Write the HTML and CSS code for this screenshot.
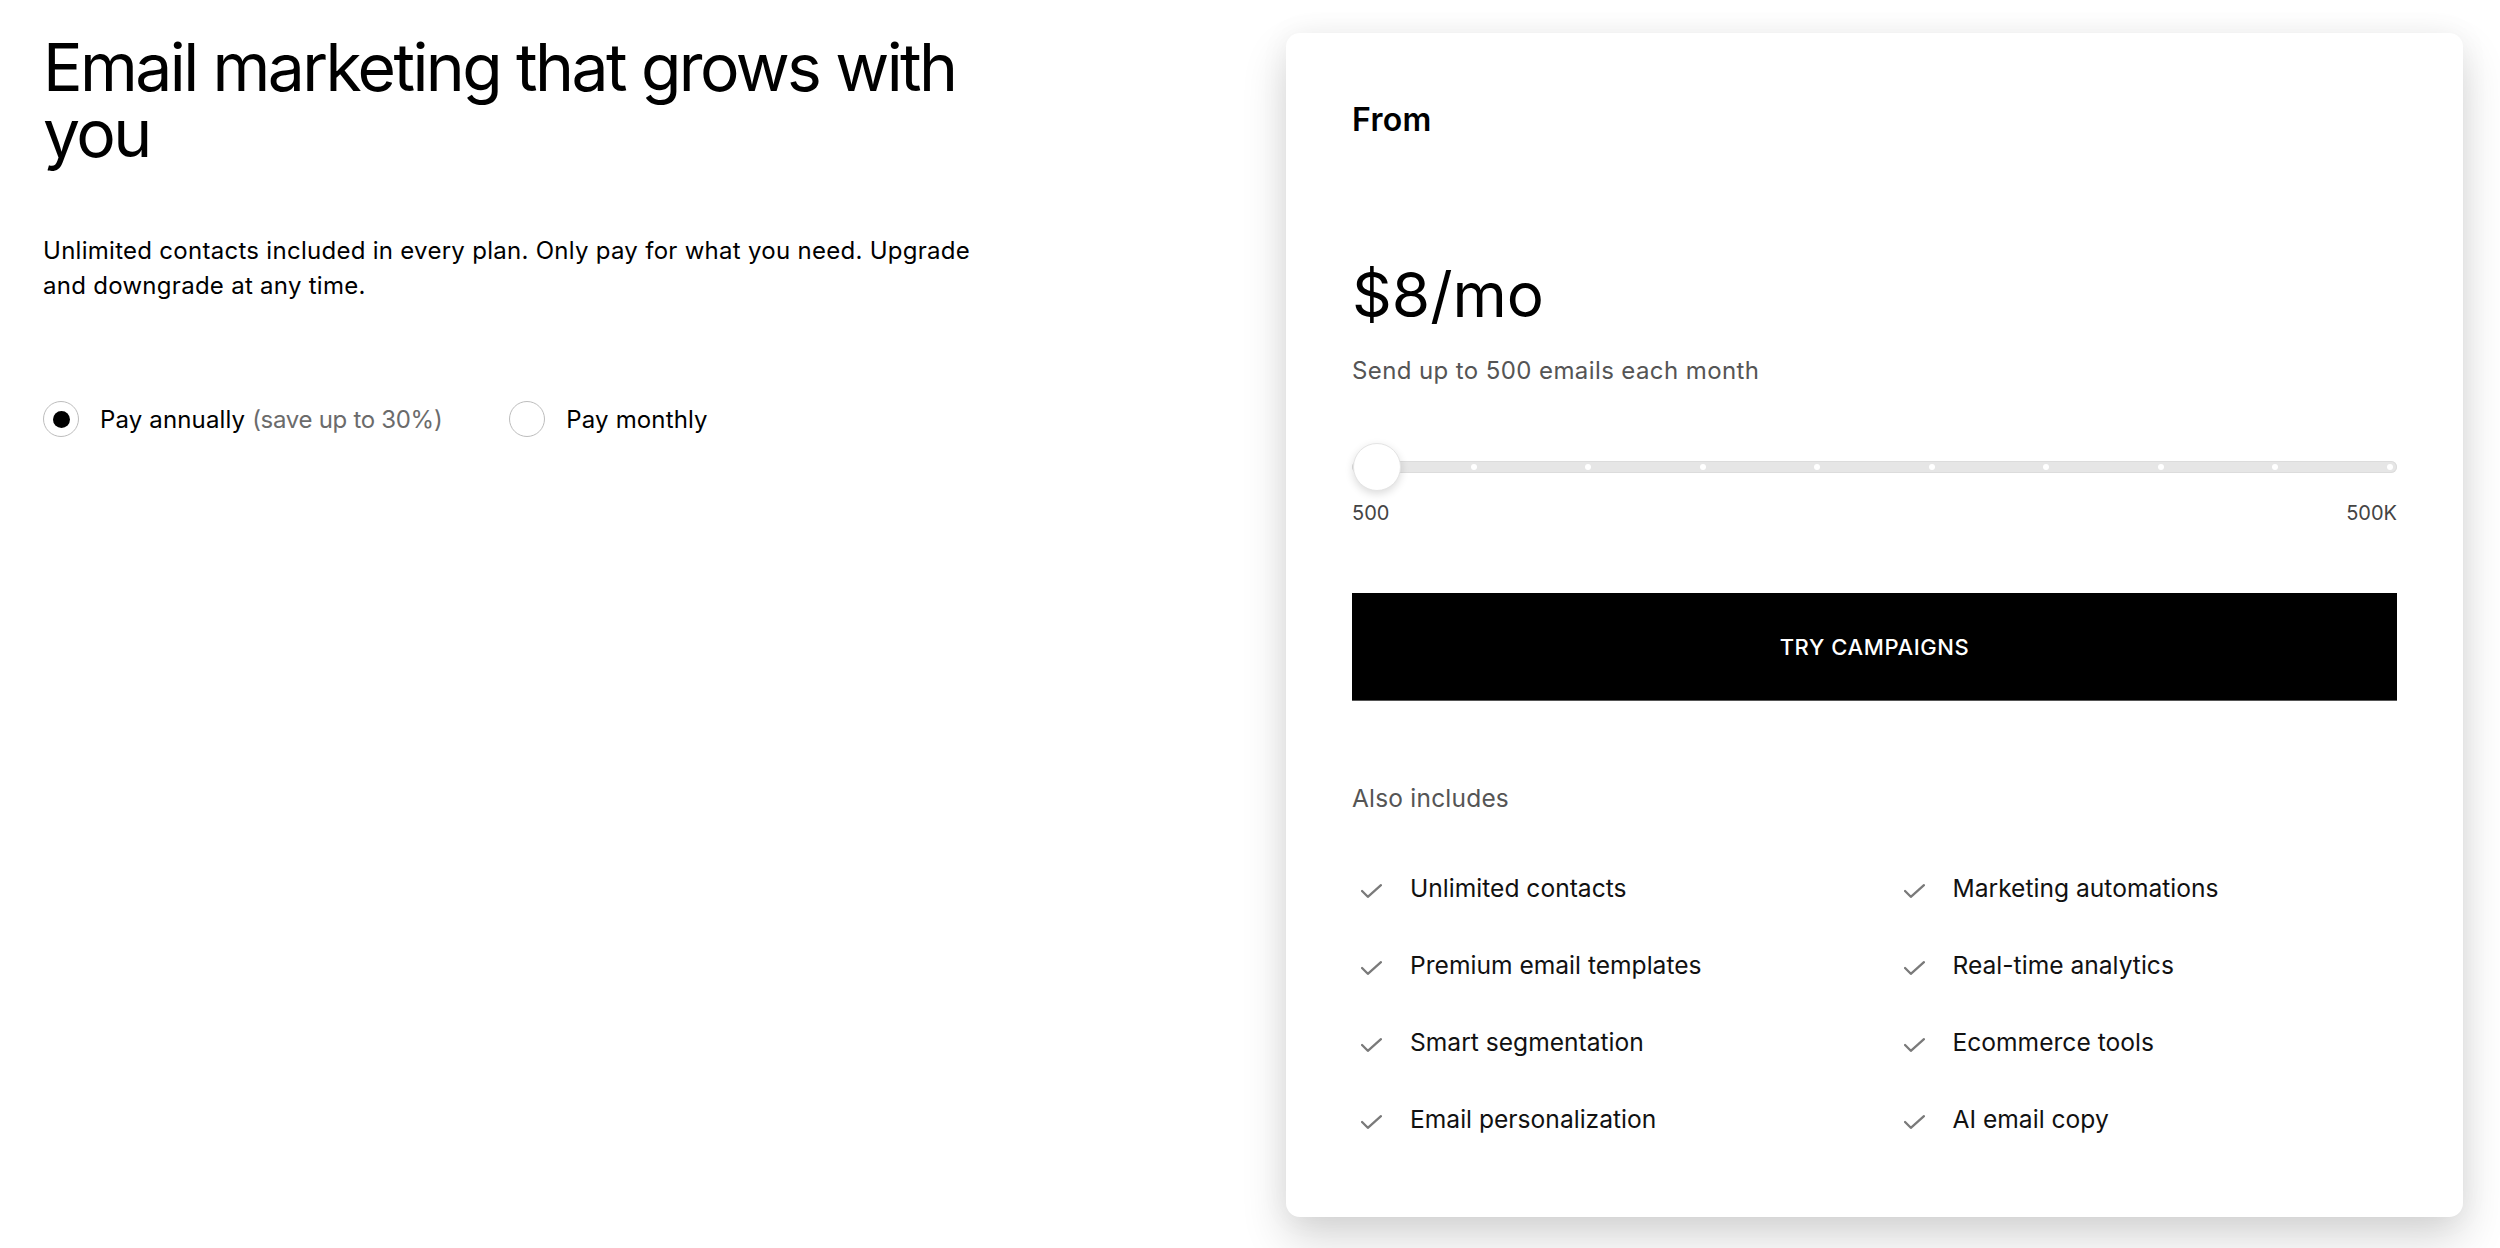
FILE: index.html
```html
<!DOCTYPE html>
<html lang="en">
<head>
<meta charset="utf-8">
<title>Email marketing pricing</title>
<link rel="stylesheet" href="styles.css">
</head>
<body>
<main class="page">
  <section class="intro">
    <h1 class="title">Email marketing that grows with you</h1>
    <p class="lead">Unlimited contacts included in every plan. Only pay for what you need. Upgrade and downgrade at any time.</p>
    <div class="billing">
      <label class="option">
        <span class="radio radio-on"><span class="radio-dot"></span></span>
        <span class="option-text">Pay annually <span class="muted">(save up to 30%)</span></span>
      </label>
      <label class="option">
        <span class="radio"></span>
        <span class="option-text">Pay monthly</span>
      </label>
    </div>
  </section>

  <section class="card">
    <div class="from">From</div>
    <div class="price">$8/mo</div>
    <div class="sends">Send up to 500 emails each month</div>

    <div class="slider">
      <div class="track">
        <span class="tick"></span><span class="tick"></span><span class="tick"></span><span class="tick"></span><span class="tick"></span>
        <span class="tick"></span><span class="tick"></span><span class="tick"></span><span class="tick"></span><span class="tick"></span>
      </div>
      <span class="thumb"></span>
    </div>
    <div class="range-labels"><span>500</span><span>500K</span></div>

    <button class="cta">TRY CAMPAIGNS</button>

    <div class="also">Also includes</div>
    <ul class="features">
      <li class="feature"><svg class="check" viewBox="0 0 20 13" aria-hidden="true"><polyline points="1,6.5 6.5,12 19,1"/></svg><span>Unlimited contacts</span></li>
      <li class="feature"><svg class="check" viewBox="0 0 20 13" aria-hidden="true"><polyline points="1,6.5 6.5,12 19,1"/></svg><span>Marketing automations</span></li>
      <li class="feature"><svg class="check" viewBox="0 0 20 13" aria-hidden="true"><polyline points="1,6.5 6.5,12 19,1"/></svg><span>Premium email templates</span></li>
      <li class="feature"><svg class="check" viewBox="0 0 20 13" aria-hidden="true"><polyline points="1,6.5 6.5,12 19,1"/></svg><span>Real-time analytics</span></li>
      <li class="feature"><svg class="check" viewBox="0 0 20 13" aria-hidden="true"><polyline points="1,6.5 6.5,12 19,1"/></svg><span>Smart segmentation</span></li>
      <li class="feature"><svg class="check" viewBox="0 0 20 13" aria-hidden="true"><polyline points="1,6.5 6.5,12 19,1"/></svg><span>Ecommerce tools</span></li>
      <li class="feature"><svg class="check" viewBox="0 0 20 13" aria-hidden="true"><polyline points="1,6.5 6.5,12 19,1"/></svg><span>Email personalization</span></li>
      <li class="feature"><svg class="check" viewBox="0 0 20 13" aria-hidden="true"><polyline points="1,6.5 6.5,12 19,1"/></svg><span>AI email copy</span></li>
    </ul>
  </section>
</main>
</body>
</html>
```
FILE: styles.css
```css
* { box-sizing: border-box; }

html, body {
  margin: 0;
  padding: 0;
  background: #ffffff;
}

body {
  font-family: Inter, "Liberation Sans", Arial, sans-serif;
  color: #000;
  -webkit-font-smoothing: antialiased;
}

.page {
  display: flex;
  justify-content: space-between;
  align-items: flex-start;
  padding: 33px 37px 0 43px;
  height: 1248px;
  overflow: hidden;
}

/* ---------- left column ---------- */
.intro {
  width: 960px;
  flex: none;
  padding-top: 1px;
}

.title {
  margin: 0;
  font-size: 66px;
  line-height: 66px;
  font-weight: 400;
  letter-spacing: -2.6px;
  color: #000;
}

.lead {
  margin: 67px 0 0;
  font-size: 24px;
  line-height: 35px;
  letter-spacing: 0.28px;
  color: #000;
}

.billing {
  display: flex;
  align-items: center;
  margin-top: 98px;
  gap: 67px;
}

.option {
  display: flex;
  align-items: center;
  gap: 21px;
  font-size: 24px;
  line-height: 35px;
  letter-spacing: 0;
  color: #000;
}

.option-text { letter-spacing: 0.15px; }

.muted {
  color: #6b6b6b;
  letter-spacing: -0.3px;
}

.radio {
  width: 36px;
  height: 36px;
  border-radius: 50%;
  border: 1.6px solid #bdbdbd;
  display: flex;
  align-items: center;
  justify-content: center;
  flex: none;
}

.radio-dot {
  width: 17px;
  height: 17px;
  border-radius: 50%;
  background: #000;
}

/* ---------- card ---------- */
.card {
  width: 1177px;
  flex: none;
  background: #fff;
  border-radius: 14px;
  padding: 67px 66px 80px;
  box-shadow: 0 22px 45px rgba(0, 0, 0, 0.16), 0 0 30px rgba(0, 0, 0, 0.05);
}

.from {
  font-size: 32px;
  line-height: 40px;
  font-weight: 600;
  letter-spacing: 0.3px;
}

.price {
  margin-top: 118px;
  font-size: 62px;
  line-height: 74px;
  font-weight: 400;
  letter-spacing: 0;
}

.sends {
  margin-top: 21px;
  font-size: 24px;
  line-height: 35px;
  letter-spacing: 0.4px;
  color: #555;
}

.slider {
  position: relative;
  margin-top: 55px;
  height: 48px;
  display: flex;
  align-items: center;
}

.track {
  width: 100%;
  height: 12px;
  border-radius: 6px;
  background: #e6e6e6;
  box-shadow: inset 0 0 0 1px #dcdcdc;
  display: flex;
  align-items: center;
  justify-content: space-between;
  padding: 0 4px;
}

.tick {
  width: 6px;
  height: 6px;
  border-radius: 50%;
  background: #fff;
}

.thumb {
  position: absolute;
  left: 1px;
  top: 0;
  width: 48px;
  height: 48px;
  border-radius: 50%;
  background: #fff;
  border: 1px solid #e4e4e4;
  box-shadow: 0 3px 8px rgba(0, 0, 0, 0.14);
}

.range-labels {
  margin-top: 10px;
  display: flex;
  justify-content: space-between;
  font-size: 20px;
  line-height: 24px;
  color: #444;
}

.cta {
  display: block;
  width: 100%;
  height: 108px;
  margin-top: 68px;
  border: 0;
  border-bottom: 1px solid #555;
  background: #000;
  color: #fff;
  font-family: inherit;
  font-size: 22px;
  font-weight: 500;
  letter-spacing: 0.6px;
  cursor: pointer;
}

.also {
  margin-top: 80px;
  font-size: 24.5px;
  line-height: 35px;
  letter-spacing: 0.2px;
  color: #555;
}

.features {
  list-style: none;
  margin: 55px 0 0;
  padding: 0;
  display: grid;
  grid-template-columns: 1fr 1fr;
  column-gap: 40px;
  row-gap: 42px;
}

.feature {
  display: flex;
  align-items: center;
  gap: 28px;
  font-size: 24.6px;
  line-height: 35px;
  letter-spacing: 0;
  color: #111;
}

.check {
  width: 21px;
  height: 14px;
  margin-left: 9px;
  margin-top: 5px;
  flex: none;
  fill: none;
  stroke: #7a7a7a;
  stroke-width: 2.2;
  stroke-linecap: round;
  stroke-linejoin: round;
}
```
